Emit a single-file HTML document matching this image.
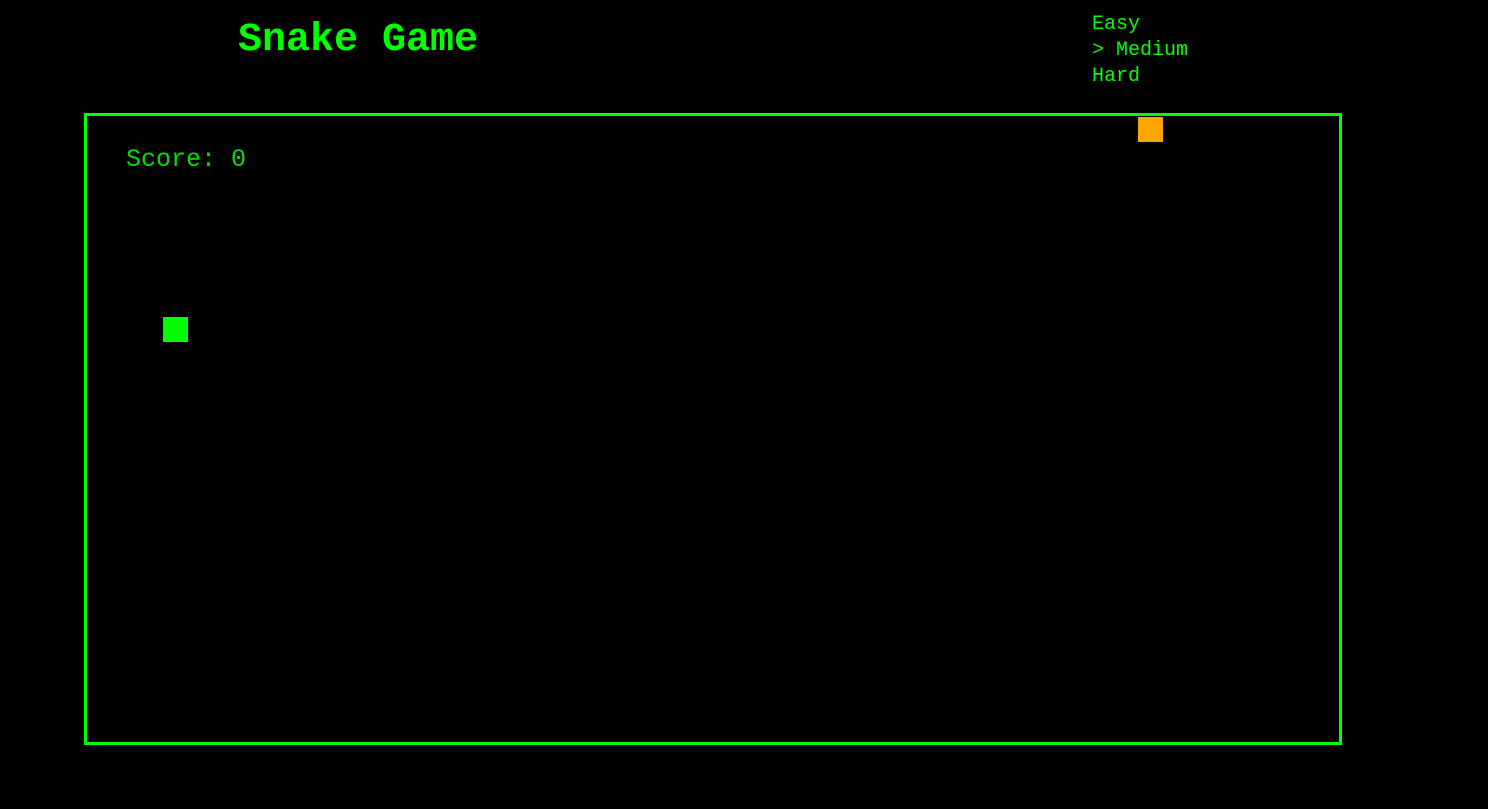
<!DOCTYPE html>
<html><head><meta charset="utf-8"><style>
html,body{margin:0;padding:0;background:#000;width:1488px;height:809px;overflow:hidden;font-family:"Liberation Mono",monospace;color:#00ff00}
.t{position:absolute;left:238px;top:16px;font-size:40px;font-weight:bold;line-height:50px;white-space:nowrap}
.m{position:absolute;left:1092px;top:12px;font-size:20px;line-height:26px;white-space:pre}
.b{position:absolute;left:84px;top:113px;width:1252px;height:626px;border:3px solid #00ff00}
.s{position:absolute;left:126px;top:145px;font-size:25px;line-height:30px;color:#00e000;white-space:nowrap}
.f{position:absolute;left:1138px;top:117px;width:25px;height:25px;background:#ffa500}
.k{position:absolute;left:163px;top:317px;width:25px;height:25px;background:#00ff00}
</style></head><body>
<div class="t">Snake Game</div>
<div class="m">Easy
&gt; Medium
Hard</div>
<div class="b"></div>
<div class="s">Score: 0</div>
<div class="f"></div>
<div class="k"></div>
</body></html>
